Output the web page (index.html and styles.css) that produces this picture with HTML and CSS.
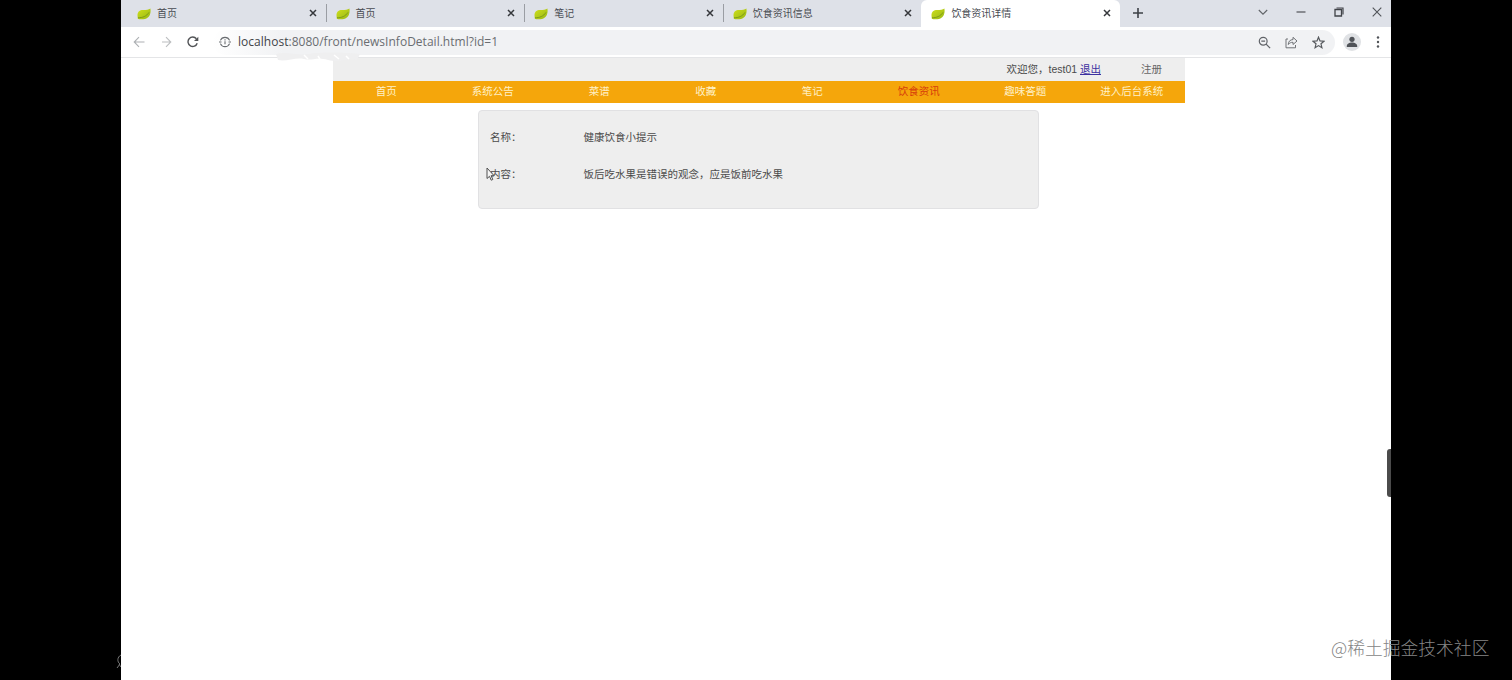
FILE: index.html
```html
<!DOCTYPE html>
<html lang="zh-CN">
<head>
<meta charset="utf-8">
<title>饮食资讯详情</title>
<link rel="stylesheet" href="styles.css">
</head>
<body>
<svg class="defs" width="0" height="0">
  <defs>
    <linearGradient id="leafFill" x1="0" y1="0" x2="1" y2="1"><stop offset="0" stop-color="#d0e01c"/><stop offset="1" stop-color="#98b814"/></linearGradient>
    <symbol id="leaf" viewBox="0 0 14 12"><path fill="url(#leafFill)" d="M.7 9.5C-.2 4 2.2 2 6 2C9.5 2 11.6 1.8 13.4.4C14.2 5.5 12.6 10 8 10.9C5 11.5 2.2 11.4.7 10.4Z"/><path d="M1 9.8C5.5 9.8 9.4 8.4 12 4.4" fill="none" stroke="#7c9a18" stroke-width="1"/></symbol>
    <symbol id="close" viewBox="0 0 8 8"><path d="M1 1l6 6M7 1L1 7" fill="none" stroke="#35373b" stroke-width="1.5"/></symbol>
  </defs>
</svg>
<div class="browser">
  <header class="tabs">
    <div class="tab"><svg class="leaf"><use href="#leaf"/></svg><span class="tab-title">首页</span><svg class="close"><use href="#close"/></svg></div>
    <div class="tab split"><svg class="leaf"><use href="#leaf"/></svg><span class="tab-title">首页</span><svg class="close"><use href="#close"/></svg></div>
    <div class="tab split"><svg class="leaf"><use href="#leaf"/></svg><span class="tab-title">笔记</span><svg class="close"><use href="#close"/></svg></div>
    <div class="tab split"><svg class="leaf"><use href="#leaf"/></svg><span class="tab-title">饮食资讯信息</span><svg class="close"><use href="#close"/></svg></div>
    <div class="tab active"><svg class="leaf"><use href="#leaf"/></svg><span class="tab-title">饮食资讯详情</span><svg class="close"><use href="#close"/></svg></div>
    <div class="tab-rest">
      <svg class="plus" viewBox="0 0 10 10"><path d="M5 0v10M0 5h10" stroke="#3c4046" stroke-width="1.6"/></svg>
      <div class="window-buttons">
        <svg width="10" height="10" viewBox="0 0 10 10"><path d="M.8 3L5 7.2L9.2 3" fill="none" stroke="#606368" stroke-width="1.1"/></svg>
        <svg width="10" height="10" viewBox="0 0 10 10"><path d="M.5 5h9" stroke="#505358" stroke-width="1.2"/></svg>
        <svg width="10" height="10" viewBox="0 0 10 10"><path d="M1 2.5h6.5V9H1z" fill="none" stroke="#404348" stroke-width="1.3"/><path d="M2.5 1H9v6.5" fill="none" stroke="#404348" stroke-width="1.2"/></svg>
        <svg width="10" height="10" viewBox="0 0 10 10"><path d="M.7.7l8.6 8.6M9.3.7L.7 9.3" stroke="#505358" stroke-width="1.1"/></svg>
      </div>
    </div>
  </header>
  <div class="toolbar">
    <div class="history">
      <svg width="12" height="12" viewBox="0 0 12 12"><path d="M11.5 6H1.2M6 1.2L1.2 6L6 10.8" fill="none" stroke="#adb0b3" stroke-width="1.1"/></svg>
      <svg width="12" height="12" viewBox="0 0 12 12"><path d="M2 6h8.8M6 1.2L10.8 6L6 10.8" fill="none" stroke="#bcbec0" stroke-width="1.1"/></svg>
      <svg width="12" height="12" viewBox="0 0 12 12"><path d="M10.2 7.2A4.7 4.7 0 1 1 9.4 2.8" fill="none" stroke="#525457" stroke-width="1.4"/><path d="M11.3.8v4.3H7z" fill="#525457"/></svg>
    </div>
    <div class="address">
      <svg class="info" viewBox="0 0 12 12"><path d="M1.4 4.4A5 5 0 0 1 10.6 4.4M10.6 7.6A5 5 0 0 1 1.4 7.6M0 6h2.5M9.5 6H12M6 5.2v3M6 3.2v1.2" fill="none" stroke="#696c70" stroke-width="1.1"/></svg>
      <span class="url"><span class="host">localhost</span>:8080/front/newsInfoDetail.html?id=1</span>
      <div class="address-icons">
        <svg width="13" height="13" viewBox="0 0 13 13"><circle cx="5.2" cy="5.2" r="3.9" fill="none" stroke="#606368" stroke-width="1.2"/><path d="M3.3 5.2h3.8M8.1 8.1l4 4" stroke="#606368" stroke-width="1.3"/></svg>
        <svg width="13" height="13" viewBox="0 0 13 13"><path d="M3 3H1v8.8h9.5V9" fill="none" stroke="#707377" stroke-width="1"/><path d="M3.2 8.5C3.5 5.2 5.2 3.7 8 3.6V1.3L12 5L8 8.5V6.3C6 6.2 4.5 7 3.2 8.5z" fill="none" stroke="#707377" stroke-width="1" stroke-linejoin="round"/></svg>
        <svg width="13" height="13" viewBox="0 0 13 13"><path d="M6.5 1.2l1.5 3.7 4 .3-3 2.6.9 3.9-3.4-2.1-3.4 2.1.9-3.9-3-2.6 4-.3z" fill="none" stroke="#56595d" stroke-width="1.2"/></svg>
      </div>
    </div>
    <svg class="avatar" viewBox="0 0 18 18"><circle cx="9" cy="9" r="9" fill="#e0e2e5"/><circle cx="9" cy="6.3" r="2.6" fill="#505358"/><path d="M3.8 13.3c0-5 10.4-5 10.4 0v.8H3.8z" fill="#505358"/></svg>
    <svg class="menu" viewBox="0 0 4 12"><g fill="#505358"><circle cx="2" cy="1.5" r="1.2"/><circle cx="2" cy="6" r="1.2"/><circle cx="2" cy="10.5" r="1.2"/></g></svg>
  </div>
  <main class="page">
    <div class="site">
      <div class="userbar"><span class="welcome">欢迎您，test01 <a class="logout">退出</a></span><span class="register">注册</span></div>
      <nav class="nav"><span>首页</span><span>系统公告</span><span>菜谱</span><span>收藏</span><span>笔记</span><span class="current">饮食资讯</span><span>趣味答题</span><span>进入后台系统</span></nav>
      <section class="card">
        <div class="row"><span class="label">名称：</span><span>健康饮食小提示</span></div>
        <div class="row"><span class="label">内容：</span><span>饭后吃水果是错误的观念，应是饭前吃水果</span></div>
      </section>
    </div>
  </main>
</div>
<svg class="smudge" viewBox="0 0 88 12"><path d="M2 3C15 0 22 5 34 3S70 1 86 3L83 9C72 7 66 12 54 9S38 10 30 8S12 11 4 9z" fill="#efeff0"/><path d="M30 4l4 4M44 5l3 5M60 4l5 4M72 5l3 3" stroke="#fff" stroke-width="1.5"/></svg>
<svg class="cursor" viewBox="0 0 9 14"><path d="M1 1v10.5l2.5-2.2 1.7 3.9 1.6-.7-1.7-3.8h3z" fill="#f5f5f5" stroke="#505050" stroke-width="1"/></svg>
<div class="handle"></div>
<svg class="edge-mark" viewBox="0 0 5 16"><path d="M5 1C1 3 1 8 4 10L1 14M3 10l2 3" fill="none" stroke="#777" stroke-width="1"/></svg>
<div class="watermark">@稀土掘金技术社区</div>
</body>
</html>
```
FILE: styles.css
```css
* { box-sizing: border-box; }
body {
  margin: 0;
  height: 680px;
  overflow: hidden;
  background: #000;
  font-family: "Liberation Sans", "Noto Sans CJK SC", sans-serif;
}
svg { display: block; flex: none; }
.defs { position: absolute; }
.browser { width: 1270px; height: 680px; margin-left: 121px; background: #fff; }

.tabs { display: flex; height: 27px; padding-left: 6px; background: #dee1e8; }
.tab {
  display: flex;
  align-items: center;
  width: 198.6px;
  flex: none;
  padding: 0 9px 0 9px;
  border-left: 1px solid transparent;
  font-size: 10px;
  line-height: 14px;
  color: #494c52;
}
.split {
  border-image: linear-gradient(transparent 5px, #9a9da3 5px, #9a9da3 21px, transparent 21px) 1;
  border-width: 0 0 0 1px;
  border-style: solid;
}
.active { background: #fff; border-radius: 6px 6px 0 0; }
.leaf { width: 14px; height: 12px; margin-right: 6px; }
.tab-title { flex: 1; }
.close { width: 8px; height: 8px; margin-bottom: 1px; }
.tab-rest { flex: 1; display: flex; justify-content: space-between; align-items: center; padding: 0 9px 3px 13px; }
.plus { width: 10px; height: 10px; margin-top: 2px; }
.window-buttons { display: flex; gap: 28px; }

.toolbar { display: flex; align-items: center; height: 31px; padding: 0 11px 0 12px; border-bottom: 1px solid #e4e5e7; }
.history { display: flex; gap: 15px; width: 80px; }
.address {
  display: flex;
  align-items: center;
  width: 1122px;
  height: 25px;
  padding: 0 10px 0 6px;
  border-radius: 13px;
  background: linear-gradient(90deg, #fff, #f1f2f4 70px);
}
.info { width: 12px; height: 12px; margin-right: 7px; }
.url { font: 12px/18px "Open Sans", "Noto Sans", sans-serif; letter-spacing: 0.02px; color: #6a6d71; white-space: nowrap; flex: 1; }
.host { color: #414448; }
.address-icons { display: flex; gap: 14px; }
.avatar { width: 18px; height: 18px; margin-left: 8px; }
.menu { width: 4px; height: 12px; margin-left: auto; }

.page { padding-left: 212px; }
.site { width: 852px; font-size: 10.5px; color: #4b4b4b; }
.userbar { display: flex; justify-content: flex-end; height: 23px; padding-right: 23px; gap: 40px; background: #eee; line-height: 22px; }
.logout { color: #3c30a0; text-decoration: underline; }
.register { color: #666; }
.nav { display: grid; grid-template-columns: repeat(8, 1fr); height: 22px; background: #f5a60b; color: #fff1c8; text-align: center; line-height: 21px; }
.current { color: #d73c0b; }
.card { width: 561px; height: 99px; margin: 7px 0 0 145px; padding: 8px 11px; border: 1px solid #e1e1e3; border-radius: 4px; background: #eee; }
.row { display: grid; grid-template-columns: 93.5px 1fr; height: 37px; line-height: 36px; }

.smudge { position: absolute; left: 274px; top: 51px; width: 88px; height: 12px; }
.cursor { position: absolute; left: 486px; top: 167px; width: 9px; height: 14px; }
.handle { position: absolute; left: 1387px; top: 449px; width: 4px; height: 48px; border-radius: 3px 0 0 3px; background: #4b4b4b; }
.edge-mark { position: absolute; left: 116px; top: 654px; width: 5px; height: 16px; }
.watermark { position: absolute; left: 1331px; top: 634px; font: 300 17.8px/26px "Noto Sans CJK SC", sans-serif; color: #858585; white-space: nowrap; }
```
